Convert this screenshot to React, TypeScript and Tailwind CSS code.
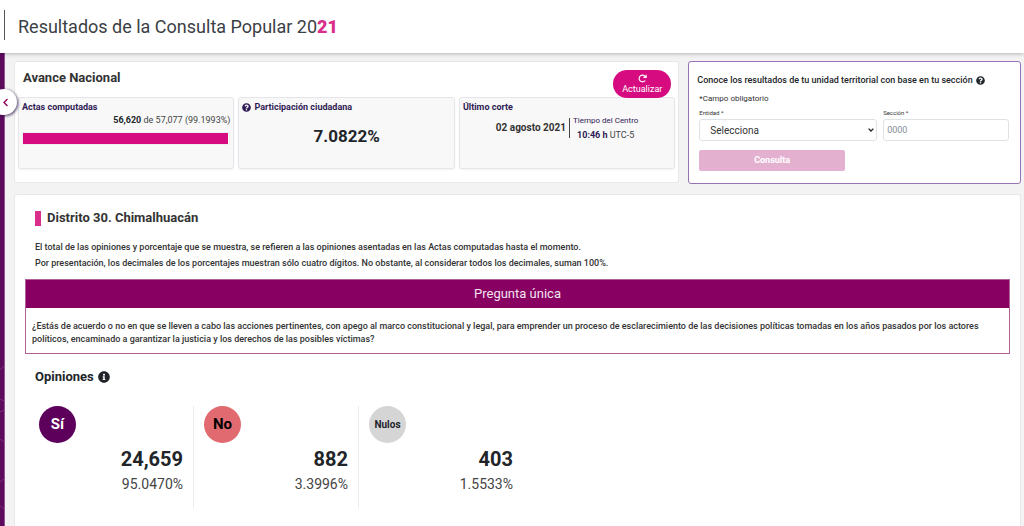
import { FaChevronLeft, FaInfoCircle, FaQuestionCircle } from "react-icons/fa";
import { FaArrowRotateRight } from "react-icons/fa6";

const opinions = [
    { label: "Sí", votes: "24,659", percent: "95.0470%", badge: "bg-[#5c005c] text-white text-[15px]" },
    { label: "No", votes: "882", percent: "3.3996%", badge: "bg-[#e06a70] text-black text-[15px]" },
    { label: "Nulos", votes: "403", percent: "1.5533%", badge: "bg-[#d5d5d5] text-[#212529] text-[10px]" },
];

const statCard = "h-[72px] px-[3px] pt-[3px] rounded-[3px] border border-[#e6e6ea] bg-[#f8f8f8] shadow-xs";
const statTitle = "flex items-center gap-[3px] text-[9px] leading-3 font-bold text-[#2f1b55]";

const Header = () => {
    return (
        <header className="relative z-10 flex items-center h-[53px] pl-1 bg-white shadow-[0_1px_4px_rgba(0,0,0,0.25)]">
            <div className="h-[30px] border-l border-[#50565b] mb-1"></div>
            <h1 className="pl-[13px] text-[18px] leading-6 text-[#3b4045]">
                Resultados de la Consulta Popular 20<span className="font-black text-[#d92e8a]">21</span>
            </h1>
        </header>
    );
}

const Sidebar = () => {
    return (
        <aside className="relative w-[5px] shrink-0 bg-[#5c0a5c] border-r border-[#8f5590]">
            <svg viewBox="0 0 4 160" className="absolute bottom-0 left-0 w-1 h-[160px]" fill="none" stroke="#8a4a8c" strokeWidth="0.6">
                <path d="M0 4 4 0M0 33l4 2M0 46l4-2M0 73l4 3M0 116l4-3M0 140l4 3" />
            </svg>
            <button aria-label="Ocultar menú" className="absolute z-10 top-[36px] -left-[9px] size-[26px] rounded-full bg-white flex items-center justify-center pl-[2px] text-[#950054] shadow-[1px_1px_3px_rgba(40,20,70,0.8)]">
                <FaChevronLeft size={9} />
            </button>
        </aside>
    );
}

const Progress = () => {
    return (
        <section className="relative min-w-0 h-[122px] px-[3px] rounded-[3px] border border-[#e8e8e8] bg-white">
            <h2 className="pl-[5px] pt-2 text-[13px] leading-4 font-bold text-[#333]">Avance Nacional</h2>
            <button className="absolute right-[7px] top-2 w-[58px] h-[28px] rounded-full bg-[#d60b80] text-white flex flex-col items-center justify-center">
                <FaArrowRotateRight size={9} />
                <span className="text-[9px] leading-3">Actualizar</span>
            </button>
            <div className="grid grid-cols-3 gap-1 mt-[11px]">
                <div className={statCard}>
                    <h3 className={statTitle}>Actas computadas</h3>
                    <p className="mt-px text-right text-[9px] leading-3 text-[#444]"><b className="text-[#212529]">56,620</b> de 57,077 (99.1993%)</p>
                    <div className="mt-[6px] h-[13px] border border-[#eee] bg-white">
                        <div className="h-full bg-[#d60b80]" style={{ width: "99.1993%" }}></div>
                    </div>
                </div>
                <div className={statCard}>
                    <h3 className={statTitle}><FaQuestionCircle size={9} />Participación ciudadana</h3>
                    <p className="mt-[13px] text-center text-[17px] leading-5 font-bold text-[#212529]">7.0822%</p>
                </div>
                <div className={statCard}>
                    <h3 className={statTitle}>Último corte</h3>
                    <div className="flex items-center justify-center mt-px">
                        <p className="pr-[3px] text-[10px] leading-5 font-bold text-[#333]">02 agosto 2021</p>
                        <div className="h-5 border-l border-[#444]"></div>
                        <div className="pl-[3px] text-center text-[#2f1b55]">
                            <p className="text-[8px] leading-[14px]">Tiempo del Centro</p>
                            <p className="text-[9px] leading-[14px]"><b>10:46 h</b> <span className="text-[#444]">UTC-5</span></p>
                        </div>
                    </div>
                </div>
            </div>
        </section>
    );
}

const SectionSearch = () => {
    return (
        <form className="min-w-0 h-[123px] pl-[10px] pr-[11px] rounded-[3px] border border-[#9873b8] bg-white text-[#333]">
            <h2 className="flex items-center gap-[3px] -ml-[2px] pt-3 text-[9px] leading-3 font-medium text-[#212529] whitespace-nowrap">
                Conoce los resultados de tu unidad territorial con base en tu sección <FaQuestionCircle size={9} />
            </h2>
            <p className="mt-[7px] text-[8px] leading-3">*Campo obligatorio</p>
            <div className="grid grid-cols-[178fr_126fr] gap-[6px] mt-1">
                <div>
                    <label htmlFor="entidad" className="block text-[6px] leading-2">Entidad *</label>
                    <div className="relative mt-[2px]">
                        <select id="entidad" className="block w-full h-[22px] pl-[10px] rounded-[3px] border border-[#dfe2e5] bg-white text-[10px] appearance-none">
                            <option>Selecciona</option>
                        </select>
                        <svg viewBox="0 0 6 4" className="absolute right-[3px] top-[9px] w-[6px] h-1 pointer-events-none" fill="none" stroke="#222" strokeWidth="1.3">
                            <path d="M.6.6 3 3 5.4.6" />
                        </svg>
                    </div>
                </div>
                <div>
                    <label htmlFor="seccion" className="block text-[6px] leading-2">Sección *</label>
                    <input id="seccion" placeholder="0000" className="block mt-[2px] w-full h-[22px] px-[3px] rounded-[3px] border border-[#dfe2e5] bg-white text-[9px] placeholder:text-[#868e96]" />
                </div>
            </div>
            <button type="button" className="block mt-[9px] w-[47%] h-[21px] rounded-[2px] bg-[#e4b0d0] text-[9px] font-bold text-white">Consulta</button>
        </form>
    );
}

const Results = () => {
    return (
        <section className="flex-1 mt-[10px] px-[10px] pt-[15px] rounded-t-[3px] border border-b-0 border-[#e8e8e8] bg-white">
            <h2 className="flex items-center gap-[6px] pl-[10px] text-[13px] leading-4 font-bold text-[#333]">
                <span className="w-[6px] h-[15px] bg-[#d92e8a]"></span>
                Distrito 30. Chimalhuacán
            </h2>
            <div className="mt-[13px] pl-[10px] text-[9px] leading-4 font-medium text-[#333]">
                <p>El total de las opiniones y porcentaje que se muestra, se refieren a las opiniones asentadas en las Actas computadas hasta el momento.</p>
                <p>Por presentación, los decimales de los porcentajes muestran sólo cuatro dígitos. No obstante, al considerar todos los decimales, suman 100%.</p>
            </div>
            <div className="mt-2 border border-[#b0609a]">
                <h3 className="h-[28px] bg-[#880061] text-center text-[13px] leading-[28px] text-[#f3e4ef]">Pregunta única</h3>
                <p className="px-[6px] pt-3 pb-[7px] text-[9px] leading-[13px] font-medium text-[#333]">
                    ¿Estás de acuerdo o no en que se lleven a cabo las acciones pertinentes, con apego al marco constitucional y legal, para emprender un proceso de esclarecimiento de las decisiones políticas tomadas en los años pasados por los actores políticos, encaminado a garantizar la justicia y los derechos de las posibles víctimas?
                </p>
            </div>
            <h3 className="flex items-center gap-1 mt-[15px] pl-[10px] text-[13px] leading-4 font-bold text-[#212529]">
                Opiniones <FaInfoCircle size={12} />
            </h3>
            <div className="flex mt-[21px] pl-1">
                {opinions.map((item) => (
                    <div key={item.label} className="w-[165px] h-[102px] px-[10px] border-r border-[#ececec] last:border-r-transparent">
                        <div className={`size-[37px] rounded-full flex items-center justify-center font-bold ${item.badge}`}>{item.label}</div>
                        <p className="mt-1 text-right text-xl leading-6 font-bold text-[#212529]">{item.votes}</p>
                        <p className="mt-[3px] text-right text-sm leading-5 text-[#444]">{item.percent}</p>
                    </div>
                ))}
            </div>
        </section>
    );
}

const App = () => {
    return (
        <div className="flex flex-col min-h-screen bg-[#f3f3f3] font-[Roboto,sans-serif]">
            <Header />
            <div className="flex flex-1">
                <Sidebar />
                <main className="flex flex-col flex-1 pl-[9px] pr-[3px] pt-2">
                    <div className="grid grid-cols-[2fr_1fr] gap-[9px]">
                        <Progress />
                        <SectionSearch />
                    </div>
                    <Results />
                </main>
            </div>
        </div>
    );
}

export default App;
